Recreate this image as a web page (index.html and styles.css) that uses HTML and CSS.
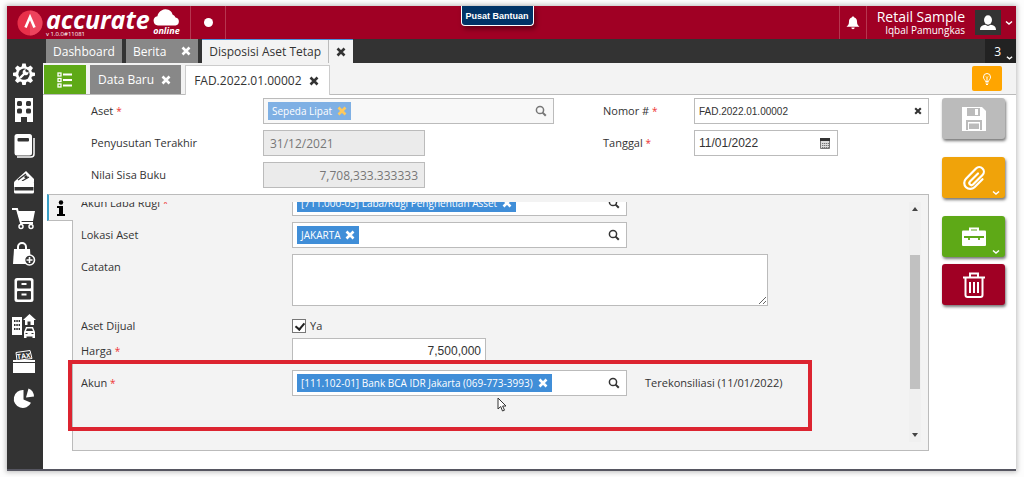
FILE: index.html
```html
<!DOCTYPE html>
<html lang="id">
<head>
    <meta charset="UTF-8">
    <meta name="viewport" content="width=device-width, initial-scale=1.0">
    <title>Accurate Online - Disposisi Aset Tetap</title>

    <link rel="stylesheet" href="styles.css">
</head>
<body>
    <svg class="sprite" aria-hidden="true">
        <symbol id="x" viewBox="0 0 10 10"><path d="M1.5 1.5l7 7M8.5 1.5l-7 7" stroke="currentColor" stroke-width="2.6"/></symbol>
        <symbol id="search" viewBox="0 0 12 12"><circle cx="5" cy="5" r="3.6" fill="none" stroke="currentColor" stroke-width="1.5"/><path d="M7.6 7.6l3.2 3.2" stroke="currentColor" stroke-width="2"/></symbol>
        <symbol id="down" viewBox="0 0 8 6"><path d="M1 1.5l3 2.5 3-2.5" fill="none" stroke="currentColor" stroke-width="1.5"/></symbol>
    </svg>

    <div class="app">
        <header class="header">
            <div class="logo">
                <svg class="logo-mark" viewBox="0 0 26 26"><circle cx="13" cy="13" r="12.5" fill="#e8304a"/><path d="M13 .5a12.500 12.500 0 0 1 0 25z" fill="#f0506a" opacity=".6"/><path d="M8.500 17.500L13 7l4.500 10.500" fill="none" stroke="#fff" stroke-width="2.600"/></svg>
                <div class="logo-name">
                    <span class="logo-text">accurate</span>
                    <span class="logo-version">v 1.0.0#11081</span>
                </div>
                <div class="logo-cloud">
                    <svg viewBox="0 0 27 18"><path d="M5 17.500a4.700 4.700 0 0 1-.6-9.300A8 8 0 0 1 9 2.200a7 7 0 0 1 10.500 4.200 4.500 4.500 0 0 1 3 3.200 4 4 0 0 1 0 7.900z" fill="#fff"/></svg>
                    <span>online</span>
                </div>
            </div>
            <div class="header-dot"><span></span></div>
            <button class="help" type="button">Pusat Bantuan</button>
            <button class="bell" type="button" aria-label="Notifikasi">
                <svg viewBox="0 0 14 14"><path d="M7 .5c.8 0 1.200.4 1.200 1 1.900.6 2.800 2 2.800 4 0 3 1 4 2.500 5.200H.5C2 9.500 3 8.500 3 5.500c0-2 .9-3.400 2.800-4 0-.6.4-1 1.200-1zM5.300 11.500h3.400a1.700 1.700 0 0 1-3.400 0z" fill="#fff"/></svg>
            </button>
            <div class="user">
                <span class="company">Retail Sample</span>
                <span class="user-name">Iqbal Pamungkas</span>
            </div>
            <button class="avatar" type="button" aria-label="Akun pengguna">
                <svg viewBox="0 0 18 16"><ellipse cx="9" cy="5" rx="4" ry="4.700" fill="#fff"/><path d="M1 15c0-3.500 2-4.500 5.500-5.200Q9 12 11.500 9.800C15 10.500 17 11.500 17 15z" fill="#fff"/></svg>
            </button>
            <svg class="header-down"><use href="#down"/></svg>
        </header>

        <div class="body">
            <nav class="sidebar">
                <a href="#" aria-label="Pengaturan"><svg viewBox="0 0 24 24"><path d="M10.300 1.500h3.400l.6 3 1.600.7 2.600-1.700L21 6l-1.700 2.500.7 1.700 3 .6v3l-3 .7-.7 1.600 1.700 2.600-2.500 2.400-2.600-1.700-1.600.7-.6 3h-3.400l-.6-3-1.700-.7-2.500 1.700L3 18.700l1.700-2.600-.7-1.600-3-.7v-3l3-.6.7-1.700L3 6l2.500-2.500L8 5.200l1.700-.7z" fill="#fff"/><circle cx="12" cy="12.200" r="5.600" fill="#333"/><path d="M8.500 15.500l5-5" stroke="#fff" stroke-width="2.400" stroke-linecap="round"/><path d="M16.500 9.500a3 3 0 1 1-2.500-2.200l-1 2 1.700 1.500z" fill="#fff"/></svg></a>
                <a href="#" aria-label="Perusahaan"><svg viewBox="0 0 24 24"><path d="M3 0h18v24h-6v-5H9v5H3z" fill="#fff"/><g fill="#333"><rect x="5" y="3" width="5" height="5" rx="1.500"/><rect x="14" y="3" width="5" height="5" rx="1.500"/><rect x="5" y="10.500" width="5" height="5" rx="1.500"/><rect x="14" y="10.500" width="5" height="5" rx="1.500"/></g></svg></a>
                <a href="#" aria-label="Buku Besar"><svg viewBox="0 0 24 24"><path d="M5 23h14q3 0 3-3V4" fill="none" stroke="#fff" stroke-width="1.500"/><rect x="2.500" y="0" width="17.500" height="21.500" rx="2.500" fill="#fff"/><rect x="5.500" y="4" width="11.500" height="3.500" rx="1" fill="#333"/></svg></a>
                <a href="#" aria-label="Kas dan Bank"><svg viewBox="0 0 24 24"><path d="M3 11L14 1l8 8v3H3z" fill="#fff"/><path d="M6 10l8-6M10 11l7-4" stroke="#333" stroke-width="1.300"/><circle cx="14" cy="7" r="1.700" fill="#333"/><rect x="2" y="11" width="20" height="12.500" rx="1.500" fill="#fff"/><path d="M2.500 17h19v3.500h-19z" fill="#333"/></svg></a>
                <a href="#" aria-label="Penjualan"><svg viewBox="0 0 24 24"><path d="M0 3h5l4 14h12" fill="none" stroke="#fff" stroke-width="2"/><path d="M5 5h18l-2 10H8z" fill="#fff"/><g fill="#333" stroke="#fff" stroke-width="1.500"><circle cx="9" cy="20.500" r="2"/><circle cx="19" cy="20.500" r="2"/></g></svg></a>
                <a href="#" aria-label="Pembelian"><svg viewBox="0 0 24 24"><path d="M6 8V5a4 4 0 0 1 8 0v3" fill="none" stroke="#fff" stroke-width="2"/><path d="M2 7h16l1 15H1z" fill="#fff"/><circle cx="17.500" cy="18" r="5" fill="#333" stroke="#fff" stroke-width="1.600"/><path d="M17.500 15v6M14.500 18h6" stroke="#fff" stroke-width="1.600"/></svg></a>
                <a href="#" aria-label="Persediaan"><svg viewBox="0 0 24 24"><rect x="2.500" y="0" width="19" height="24" rx="2.500" fill="#fff"/><g fill="#333"><rect x="5" y="2.500" width="14" height="8" rx="1"/><rect x="5" y="13" width="14" height="8.500" rx="1"/></g><path d="M9.500 6h5M9.500 16.500h5" stroke="#fff" stroke-width="2"/></svg></a>
                <a href="#" aria-label="Aset Tetap"><svg viewBox="0 0 24 24"><path d="M0 3h10v18H0z" fill="#fff"/><path d="M2 7h6M2 11h6M2 15h6" stroke="#333" stroke-width="2" stroke-dasharray="1.500 .8"/><path d="M11 6l6.500-6L24 6h-2v5h-3.500V7.500h-3V11H13V6z" fill="#fff"/><path d="M12 18l2-5h7l2 5v4.500h-11z" fill="#fff"/><path d="M14 17l1-2.500h5l1 2.500z" fill="#333"/><path d="M12 24v-3h2.500v3zM20.500 24v-3H23v3z" fill="#fff"/><path d="M13.500 19.500h2M19.500 19.500h2" stroke="#333"/></svg></a>
                <a href="#" aria-label="Pajak"><svg viewBox="0 0 24 24"><path d="M4 2.500l14-2 2 8-15 2z" fill="#333" stroke="#fff"/><text class="tax" x="5" y="8.500" transform="rotate(-7 12 6)">TAX</text><path d="M1 10h22v2H1zM1 13h22v10H1z" fill="#fff"/></svg></a>
                <a href="#" aria-label="Laporan"><svg viewBox="0 0 24 24"><path d="M11.500 4v9.500l7.500 3.200A9 9 0 1 1 11.500 4z" fill="#fff"/><path d="M14 11.500l2.500-9a9 9 0 0 1 5.500 8z" fill="#fff"/></svg></a>
            </nav>

            <main class="main">
                <div class="tabs">
                    <div class="tab"><a href="#">Dashboard</a></div>
                    <div class="tab"><a href="#">Berita</a><button type="button" aria-label="Tutup"><svg><use href="#x"/></svg></button></div>
                    <div class="tab tab-active"><a href="#">Disposisi Aset Tetap</a><button type="button" aria-label="Tutup"><svg><use href="#x"/></svg></button></div>
                    <button class="tab-count" type="button">3<svg><use href="#down"/></svg></button>
                </div>

                <div class="subtabs">
                    <button class="list-btn" type="button" aria-label="Daftar">
                        <svg viewBox="0 0 16 16"><path d="M6 2.500h9M6 8h9M6 13.500h9" stroke="#fff" stroke-width="1.800"/><g fill="none" stroke="#fff" stroke-width="1.300"><rect x="1" y="1" width="3" height="3"/><rect x="1" y="6.500" width="3" height="3"/><rect x="1" y="12" width="3" height="3"/></g></svg>
                    </button>
                    <div class="subtab"><a href="#">Data Baru</a><button type="button" aria-label="Tutup"><svg><use href="#x"/></svg></button></div>
                    <div class="subtab subtab-active"><a href="#">FAD.2022.01.00002</a><button type="button" aria-label="Tutup"><svg><use href="#x"/></svg></button></div>
                    <button class="tips" type="button" aria-label="Petunjuk">
                        <svg viewBox="0 0 10 12"><path d="M3.500 8.500C3.500 7 1.500 6.500 1.500 4a3.500 3.500 0 0 1 7 0c0 2.500-2 3-2 4.500zM3.500 10h3M4 11.500h2M5 8V4.500M4 3.500l1 1 1-1" fill="none" stroke="#fff"/></svg>
                    </button>
                </div>

                <div class="content">
                    <form class="form">
                        <div class="top-fields">
                            <div class="col-left">
                                <div class="row">
                                    <label for="aset">Aset <i>*</i></label>
                                    <div class="lookup lookup-off">
                                        <span class="token">Sepeda Lipat<svg><use href="#x"/></svg></span>
                                        <input id="aset" type="text" disabled>
                                        <svg class="search"><use href="#search"/></svg>
                                    </div>
                                </div>
                                <div class="row">
                                    <label for="susut">Penyusutan Terakhir</label>
                                    <input class="field field-off" id="susut" type="text" value="31/12/2021" disabled>
                                </div>
                                <div class="row">
                                    <label for="sisa">Nilai Sisa Buku</label>
                                    <input class="field field-off number" id="sisa" type="text" value="7,708,333.333333" disabled>
                                </div>
                            </div>
                            <div class="col-right">
                                <div class="row">
                                    <label for="nomor">Nomor # <i>*</i></label>
                                    <div class="lookup">
                                        <input class="nomor" id="nomor" type="text" value="FAD.2022.01.00002">
                                        <svg class="clear"><use href="#x"/></svg>
                                    </div>
                                </div>
                                <div class="row">
                                    <label for="tanggal">Tanggal <i>*</i></label>
                                    <div class="lookup date">
                                        <input id="tanggal" type="text" value="11/01/2022">
                                        <svg class="calendar" viewBox="0 0 12 12"><path d="M1.500 1.500h9v10h-9z" fill="#ddd" stroke="#777"/><path d="M1 1h10v3H1z" fill="#333"/><path d="M3 6.500h7M3 8.500h7M3 10.500h7" stroke="#777" stroke-dasharray="1.300 .7"/></svg>
                                    </div>
                                </div>
                            </div>
                        </div>

                        <div class="panel">
                            <button class="panel-tab" type="button" aria-label="Info">
                                <svg viewBox="0 0 10 16"><circle cx="5" cy="2.500" r="2.200"/><path d="M1 6h6v8h2v2H1v-2h2V8H1z"/></svg>
                            </button>
                            <div class="panel-body">
                                <div class="panel-scroll">
                                    <div class="row">
                                        <label for="labarugi">Akun Laba Rugi <i>*</i></label>
                                        <div class="lookup">
                                            <span class="token">[711.000-05] Laba/Rugi Penghentian Asset<svg><use href="#x"/></svg></span>
                                            <input id="labarugi" type="text">
                                            <svg class="search"><use href="#search"/></svg>
                                        </div>
                                    </div>
                                    <div class="row">
                                        <label for="lokasi">Lokasi Aset</label>
                                        <div class="lookup">
                                            <span class="token">JAKARTA<svg><use href="#x"/></svg></span>
                                            <input id="lokasi" type="text">
                                            <svg class="search"><use href="#search"/></svg>
                                        </div>
                                    </div>
                                    <div class="row row-note">
                                        <label for="catatan">Catatan</label>
                                        <textarea id="catatan"></textarea>
                                    </div>
                                    <div class="row row-check">
                                        <span class="row-title">Aset Dijual</span>
                                        <label class="check"><input type="checkbox" checked>Ya</label>
                                    </div>
                                    <div class="row row-price">
                                        <label for="harga">Harga <i>*</i></label>
                                        <input class="field number" id="harga" type="text" value="7,500,000">
                                    </div>
                                    <div class="row">
                                        <label for="akun">Akun <i>*</i></label>
                                        <div class="lookup">
                                            <span class="token">[111.102-01] Bank BCA IDR Jakarta (069-773-3993)<svg><use href="#x"/></svg></span>
                                            <input id="akun" type="text">
                                            <svg class="search"><use href="#search"/></svg>
                                        </div>
                                        <span class="row-info">Terekonsiliasi (11/01/2022)</span>
                                    </div>
                                </div>
                                <div class="scrollbar">
                                    <svg viewBox="0 0 6 4"><path d="M0 4l3-4 3 4z"/></svg>
                                    <div class="scrollbar-thumb"></div>
                                    <svg viewBox="0 0 6 4"><path d="M0 0l3 4 3-4z"/></svg>
                                </div>
                                <div class="marker"></div>
                                <svg class="cursor" viewBox="0 0 10 15"><path d="M1 1v11l2.700-2.500L5.500 14l2-.8-1.900-4.200H9z" fill="#fff" stroke="#333"/></svg>
                            </div>
                        </div>
                    </form>

                    <div class="actions">
                        <button class="action save" type="button" aria-label="Simpan">
                            <svg viewBox="0 0 26 26"><path d="M1 1h20l4 4v20H1z" fill="#fff"/><path d="M6 2h13v8H6zM5 14h16v10H5z" fill="#bbb"/><path d="M14 3h3v6h-3z" fill="#fff"/><path d="M7 16h12v8H7z" fill="#fff"/><path d="M8 17.500h10V23H8z" fill="#bbb"/></svg>
                        </button>
                        <button class="action attach" type="button" aria-label="Lampiran">
                            <svg viewBox="0 0 26 26"><path d="M17 8.500l-8 8a2 2 0 0 0 3 3L21.500 10a4.500 4.500 0 0 0-6.500-6.500l-10 10.200a6 6 0 0 0 8.500 8.500l8-8" fill="none" stroke="#fff" stroke-width="2.200" stroke-linecap="round"/></svg>
                            <svg class="action-down"><use href="#down"/></svg>
                        </button>
                        <button class="action tools" type="button" aria-label="Lainnya">
                            <svg viewBox="0 0 26 26"><path d="M9 7V4.500h8V7" fill="none" stroke="#fff" stroke-width="2"/><rect x="1" y="6.500" width="24" height="15.500" rx="1" fill="#fff"/><path d="M3 13h20M8 12v4M18 12v4" stroke="#5ea917" stroke-width="1.800"/></svg>
                            <svg class="action-down"><use href="#down"/></svg>
                        </button>
                        <button class="action delete" type="button" aria-label="Hapus">
                            <svg viewBox="0 0 26 26"><path d="M2 5.500h22M9 5V1.500h8V5M4.500 6v17q0 2 2 2h13q2 0 2-2V6M9 10v11M13 10v11M17 10v11" fill="none" stroke="#fff" stroke-width="2"/></svg>
                        </button>
                    </div>
                </div>
            </main>
        </div>
    </div>
</body>
</html>
```
FILE: styles.css
```css
* {
    box-sizing: border-box;
}

body {
    margin: 0;
    padding: 6px 8px 6px 7px;
    height: 100vh;
    background: #fdfdfd;
    color: #333;
    font-family: "Open Sans", "Noto Sans", sans-serif;
    font-size: 12px;
}

button,
input,
textarea {
    font-family: inherit;
    font-size: inherit;
    color: inherit;
    margin: 0;
}

button {
    border: 0;
    padding: 0;
    background: none;
    cursor: pointer;
}

a {
    color: inherit;
    text-decoration: none;
}

svg {
    display: block;
    flex: none;
}

.sprite {
    display: none;
}

.app {
    display: flex;
    flex-direction: column;
    height: 100%;
    background: #fff;
    border-bottom: 2px solid #565661;
    box-shadow: 0 0 5px 1px #bbb;
}

/* header */
.header {
    position: relative;
    display: flex;
    align-items: center;
    height: 33px;
    background: #a00024;
    color: #fff;
}

.logo {
    display: flex;
    align-items: center;
    gap: 3px;
    width: 184px;
    height: 100%;
    padding-left: 10px;
    border-right: 1px solid #b63650;
}

.logo-mark {
    width: 26px;
    height: 26px;
}

.logo-name {
    display: flex;
    flex-direction: column;
}

.logo-text {
    font-size: 25px;
    font-weight: bold;
    font-style: italic;
    line-height: 22px;
}

.logo-version {
    font-size: 6px;
    line-height: 8px;
}

.logo-cloud {
    display: flex;
    flex-direction: column;
    align-items: flex-end;
    height: 30px;
}

.logo-cloud svg {
    width: 27px;
    height: 18px;
}

.logo-cloud span {
    font-size: 9px;
    font-weight: bold;
    font-style: italic;
    line-height: 10px;
}

.header-dot {
    display: flex;
    align-items: center;
    justify-content: center;
    width: 35px;
    height: 100%;
    border-right: 1px solid #b63650;
}

.header-dot span {
    width: 9px;
    height: 9px;
    border-radius: 50%;
    background: #fff;
}

.help {
    position: absolute;
    top: 0;
    left: 50%;
    width: 73px;
    height: 20px;
    margin-left: -51px;
    border: 1px solid #fff;
    border-top: 0;
    border-radius: 0 0 4px 4px;
    background: #003366;
    color: #fff;
    font-family: "Liberation Sans", sans-serif;
    font-size: 9px;
    font-weight: bold;
    box-shadow: 2px 3px 5px rgba(0, 0, 0, .4);
}

.bell {
    display: flex;
    align-items: center;
    justify-content: center;
    width: 28px;
    height: 100%;
    margin-left: auto;
    border-left: 1px solid #b63650;
    border-right: 1px solid #b63650;
}

.bell svg {
    width: 14px;
    height: 14px;
}

.user {
    display: flex;
    flex-direction: column;
    width: 98px;
    text-align: right;
}

.company {
    font-size: 14px;
    line-height: 14px;
}

.user-name {
    font-size: 10px;
    line-height: 12px;
}

.avatar {
    display: flex;
    align-items: center;
    justify-content: center;
    width: 26px;
    height: 25px;
    margin-left: 10px;
    background: #333;
}

.avatar svg {
    width: 18px;
    height: 16px;
}

.header-down {
    width: 8px;
    height: 6px;
    margin: 0 3px 0 4px;
}

.body {
    display: flex;
    flex: 1;
    min-height: 0;
}

/* sidebar */
.sidebar {
    display: flex;
    flex-direction: column;
    flex: none;
    width: 36px;
    padding: 17px 2px 0 0;
    background: #333;
}

.sidebar a {
    display: flex;
    align-items: center;
    justify-content: center;
    height: 36px;
}

.sidebar svg {
    width: 24px;
    height: 24px;
}

.tax {
    fill: #fff;
    font-size: 7px;
    font-weight: bold;
}

.main {
    display: flex;
    flex-direction: column;
    flex: 1;
    min-width: 0;
}

/* tabs */
.tabs {
    display: flex;
    gap: 4px;
    height: 24px;
    padding-left: 3px;
    background: #333;
}

.tab {
    display: flex;
    align-items: center;
    background: #888;
    color: #fff;
}

.tab a {
    padding: 0 7px;
}

.tab button {
    display: flex;
    align-items: center;
    justify-content: center;
    align-self: stretch;
    width: 25px;
}

.tab svg,
.subtab svg {
    width: 10px;
    height: 10px;
}

.tab-active {
    border-top: 1px solid #4a90d9;
    background: #f3f3f3;
    color: #333;
}

.tab-active button {
    border-left: 1px solid #bbb;
}

.tab-count {
    display: flex;
    align-items: center;
    justify-content: flex-end;
    gap: 5px;
    width: 31px;
    margin-left: auto;
    padding-right: 3px;
    background: #222;
    color: #fff;
}

.tab-count svg {
    width: 7px;
    height: 6px;
    align-self: flex-end;
    margin-bottom: 2px;
}

.subtabs {
    display: flex;
    align-items: flex-end;
    gap: 4px;
    height: 32px;
    padding-left: 1px;
    border-bottom: 1px solid #bbb;
    background: #f3f3f3;
}

.list-btn {
    display: flex;
    align-items: center;
    justify-content: center;
    width: 42px;
    height: 29px;
    background: #5ea917;
}

.list-btn svg {
    width: 16px;
    height: 16px;
}

.subtab {
    display: flex;
    align-items: center;
    gap: 7px;
    height: 29px;
    padding: 0 10px 0 8px;
    background: #888;
    color: #fff;
}

.subtab-active {
    height: 30px;
    margin-bottom: -1px;
    border: 1px solid #ccc;
    border-bottom: 0;
    background: #fff;
    color: #333;
}

.tips {
    display: flex;
    align-items: center;
    justify-content: center;
    align-self: center;
    width: 30px;
    height: 25px;
    margin: 0 14px 0 auto;
    border-radius: 2px;
    background: #ffa500;
}

.tips svg {
    width: 10px;
    height: 12px;
}

/* form */
.content {
    display: flex;
    flex: 1;
    gap: 13px;
    min-height: 0;
    padding: 3px 11px 18px 4px;
}

.form {
    display: flex;
    flex-direction: column;
    flex: 1;
    gap: 6px;
    min-width: 0;
}

.top-fields {
    display: flex;
    gap: 49px;
    padding-left: 44px;
}

.col-left,
.col-right {
    display: flex;
    flex-direction: column;
    gap: 6px;
}

.col-left {
    width: 463px;
}

.col-right {
    flex: 1;
}

.row {
    display: flex;
    align-items: center;
}

.row label,
.row-title,
.row-info {
    flex: none;
    font-size: 11px;
    line-height: 16px;
}

.col-left .row > label {
    width: 172px;
}

.col-right .row > label {
    width: 91px;
}

.row i {
    color: #e33;
    font-size: 10px;
    font-style: normal;
}

.field,
.lookup {
    height: 26px;
    border: 1px solid #bbb;
    background: #fff;
}

.field {
    width: 162px;
    padding: 0 6px;
}

.field-off {
    background: #ebebeb;
    color: #777;
}

.number {
    text-align: right;
}

.lookup {
    display: flex;
    align-items: center;
    flex: 1;
    gap: 4px;
    min-width: 0;
    padding: 0 6px 0 4px;
}

.lookup-off {
    background: #f8f8f8;
}

.lookup input {
    flex: 1;
    width: 0;
    min-width: 0;
    padding: 0;
    border: 0;
    background: transparent;
    font-family: "Liberation Sans", sans-serif;
}

.lookup .nomor {
    font-size: 10px;
}

.lookup.date {
    flex: none;
    width: 144px;
}

.token {
    display: flex;
    align-items: center;
    flex: none;
    gap: 5px;
    height: 18px;
    padding: 0 4px;
    background: #408ed8;
    color: #fff;
    font-size: 10px;
    white-space: nowrap;
}

.lookup-off .token {
    background: #7fb0e4;
}

.lookup-off .token svg {
    color: #ffc95c;
}

.token svg {
    width: 10px;
    height: 10px;
}

.search {
    width: 12px;
    height: 12px;
}

.lookup-off .search {
    color: #777;
}

.clear {
    width: 8px;
    height: 8px;
}

.calendar {
    width: 12px;
    height: 12px;
}

/* panel */
.panel {
    display: flex;
    flex: 1;
    min-height: 0;
}

.panel-tab {
    position: relative;
    z-index: 1;
    display: flex;
    align-items: center;
    justify-content: center;
    width: 26px;
    height: 27px;
    margin-right: -1px;
    border: 1px solid #bbb;
    border-left: 2px solid #3aa0c8;
    border-right: 0;
    background: #f3f3f3;
}

.panel-tab svg {
    width: 10px;
    height: 16px;
}

.panel-body {
    position: relative;
    display: flex;
    flex: 1;
    min-width: 0;
    padding: 7px 7px 8px 8px;
    border: 1px solid #bbb;
    background: #f3f3f3;
}

/* the list is scrolled down, so its first row is cut at the top */
.panel-scroll {
    display: flex;
    flex-direction: column;
    justify-content: flex-end;
    flex: 1;
    gap: 6px;
    padding-bottom: 46px;
    overflow: hidden;
}

.panel-scroll .row {
    flex: none;
}

.panel-scroll .row > label:first-child,
.row-title {
    width: 211px;
}

.panel-scroll .lookup {
    flex: none;
    width: 335px;
}

.panel-scroll .field {
    width: 194px;
    padding: 0 4px;
    font-family: "Liberation Sans", sans-serif;
}

.row-note {
    align-items: flex-start;
}

.row-note label {
    padding-top: 5px;
}

.row-note textarea {
    display: block;
    width: 476px;
    height: 52px;
    border: 1px solid #bbb;
    background: #fff;
}

.row-check {
    height: 20px;
    padding-top: 8px;
}

.check {
    display: flex;
    align-items: center;
    gap: 4px;
}

.check input {
    appearance: none;
    width: 14px;
    height: 14px;
    border: 1px solid #777;
    background: #fff;
}

.check input:checked::after {
    content: "";
    display: block;
    width: 4px;
    height: 7px;
    margin: 1px 0 0 4px;
    border: solid #222;
    border-width: 0 2px 2px 0;
    transform: rotate(40deg);
}

.row-info {
    margin-left: 18px;
}

.scrollbar {
    display: flex;
    flex-direction: column;
    align-items: center;
    justify-content: space-between;
    width: 12px;
    padding: 5px 1px;
    background: #f0f0f0;
    fill: #444;
}

.scrollbar svg {
    width: 6px;
    height: 4px;
}

.scrollbar-thumb {
    width: 10px;
    height: 134px;
    background: #c1c1c1;
}

.marker {
    position: absolute;
    top: 165px;
    left: -5px;
    width: 744px;
    height: 71px;
    border: 4px solid #dc2430;
}

.cursor {
    position: absolute;
    top: 202px;
    left: 424px;
    width: 10px;
    height: 15px;
}

/* action buttons */
.actions {
    display: flex;
    flex-direction: column;
    gap: 18px;
    width: 63px;
}

.action {
    position: relative;
    display: flex;
    align-items: center;
    justify-content: center;
    height: 41px;
    border-radius: 3px;
    color: #fff;
    box-shadow: 1px 2px 3px #777;
}

.action svg {
    width: 26px;
    height: 26px;
}

.action .action-down {
    position: absolute;
    right: 5px;
    bottom: 2px;
    width: 8px;
    height: 6px;
}

.save {
    background: #bbb;
}

.attach {
    background: #f0a30a;
}

.tools {
    background: #5ea917;
}

.delete {
    margin-top: -11px;
    background: #a00024;
}
```
